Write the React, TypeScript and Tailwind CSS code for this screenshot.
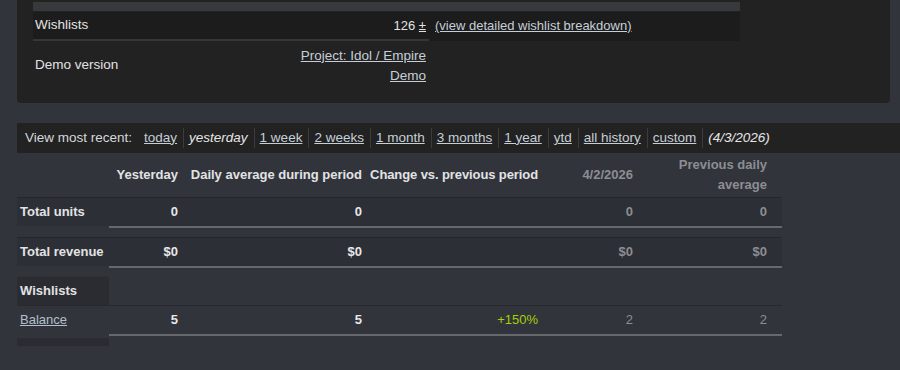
import React from 'react'

const ranges = ['today', 'yesterday', '1 week', '2 weeks', '1 month', '3 months', '1 year', 'ytd', 'all history', 'custom']

const cols = 'grid grid-cols-[92px_76px_184px_176px_95px_142px]'

function Cell({
  children,
  last,
  className = '',
}: {
  children?: React.ReactNode
  last?: boolean
  className?: string
}) {
  return (
    <div className={`flex h-[30px] items-center justify-end border-b-2 border-[#65686d] bg-[#2c2f36] ${last ? 'pr-[15px]' : 'pr-[7px]'} ${className}`}>
      {children}
    </div>
  )
}

function DataRow({ label, values }: { label: string; values: string[] }) {
  return (
    <div className={`${cols} items-start border-t border-[#25272c]`}>
      <div className="flex h-[28px] items-center bg-[#2c2f36] pl-[3px] font-bold text-[#e2e3e4]">{label}</div>
      <Cell className="font-bold text-[#e8e8e8]">{values[0]}</Cell>
      <Cell className="font-bold text-[#e8e8e8]">{values[1]}</Cell>
      <Cell>{values[2]}</Cell>
      <Cell className="font-bold text-[#8c8e92]">{values[3]}</Cell>
      <Cell last className="font-bold text-[#8c8e92]">{values[4]}</Cell>
    </div>
  )
}

function BalanceCell({ children, last, className = '' }: { children?: React.ReactNode; last?: boolean; className?: string }) {
  return (
    <div className={`flex h-[30px] items-center justify-end border-b-2 border-[#65686d] ${last ? 'pr-[15px]' : 'pr-[7px]'} ${className}`}>
      {children}
    </div>
  )
}

export default function App() {
  return (
    <div className="h-[370px] w-[900px] overflow-hidden bg-[#31343b] font-['Liberation_Sans',Arial,sans-serif] text-[13px] text-[#e2e3e4]">
      {/* Summary panel */}
      <div className="ml-[17px] h-[103px] w-[873px] rounded-b-[4px] bg-[#222222] pl-[16px]">
        <div className="w-[707px] pt-[2px]">
          <div className="h-[9px] bg-[#38393d]" />
          <div className="mt-[1px] flex h-[29px] bg-[#1c1c1c]">
            <div className="flex w-[396px] items-center justify-between border-b-2 border-[#363636] pl-[2px] pr-[3px]">
              <span className="text-[13.5px]">Wishlists</span>
              <span>
                126 <span className="underline">±</span>
              </span>
            </div>
            <div className="flex items-center pb-[2px] pl-[6px]">
              <span className="text-[#c6cfd8] underline">(view detailed wishlist breakdown)</span>
            </div>
          </div>
          <div className="flex h-[49px] w-[396px] items-center justify-between pl-[2px] pr-[3px] text-[13.5px]">
            <span>Demo version</span>
            <span className="flex flex-col items-end leading-[20px] text-[#c6cfd8] underline">
              <span>Project: Idol / Empire</span>
              <span>Demo</span>
            </span>
          </div>
        </div>
      </div>

      {/* Range selector */}
      <div className="ml-[17px] mt-[20px] flex h-[30px] items-center bg-[#222222] pl-[8px] text-[13.5px] text-[#d5d8db]">
        <span className="mr-[12px]">View most recent:</span>
        {ranges.map((r, i) => (
          <span key={r} className={`flex items-center ${i > 0 ? 'ml-[6px] border-l border-[#3c3c3c] pl-[5px]' : ''}`}>
            {r === 'yesterday' ? (
              <span className="italic text-[#e6e6e6]">{r}</span>
            ) : (
              <span className="text-[#c6cfd8] underline">{r}</span>
            )}
          </span>
        ))}
        <span className="ml-[6px] border-l border-[#3c3c3c] pl-[5px] italic text-[#e6e6e6]">(4/3/2026)</span>
      </div>

      {/* Stats table */}
      <div className="ml-[17px] w-[765px]">
        <div className={`${cols} h-[44px] items-center whitespace-nowrap font-bold`}>
          <div />
          <div className="pr-[7px] text-right text-[#e2e3e4]">Yesterday</div>
          <div className="pr-[7px] text-right text-[#e2e3e4]">Daily average during period</div>
          <div className="flex justify-end pr-[7px] text-[#e2e3e4]">
            <span className="tracking-[-0.1px]">Change vs. previous period</span>
          </div>
          <div className="pr-[7px] text-right text-[#8c8e92]">4/2/2026</div>
          <div className="pr-[15px] text-right leading-[20px] text-[#8c8e92]">
            Previous daily
            <br />
            average
          </div>
        </div>

        <DataRow label="Total units" values={['0', '0', '', '0', '0']} />
        <div className="mt-[9px]">
          <DataRow label="Total revenue" values={['$0', '$0', '', '$0', '$0']} />
        </div>

        <div className={`${cols} mt-[8px]`}>
          <div className="flex h-[29px] items-center border-t border-[#2e3036] bg-[#2a2c32] pl-[3px] font-bold text-[#e2e3e4]">Wishlists</div>
        </div>
        <div className={`${cols} items-start border-t border-[#27292e]`}>
          <div className="flex h-[28px] items-center pl-[3px]">
            <span className="text-[#b3c0cc] underline">Balance</span>
          </div>
          <BalanceCell className="font-bold text-[#e8e8e8]">5</BalanceCell>
          <BalanceCell className="font-bold text-[#e8e8e8]">5</BalanceCell>
          <BalanceCell className="text-[#a4d007]">+150%</BalanceCell>
          <BalanceCell className="text-[#8c8e92]">2</BalanceCell>
          <BalanceCell last className="text-[#8c8e92]">2</BalanceCell>
        </div>
        <div className={cols}>
          <div className="mt-[2px] h-[8px] bg-[#2a2c32]" />
        </div>
      </div>
    </div>
  )
}
